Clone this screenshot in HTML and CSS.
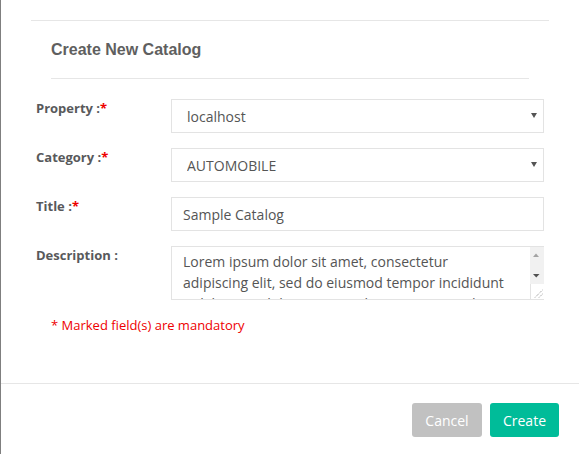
FILE: index.html
```html
<!DOCTYPE html>
<html lang="en">
<head>
<meta charset="utf-8">
<title>Create New Catalog</title>
<link rel="stylesheet" href="styles.css">
</head>
<body>
<div class="modal">
  <div class="top-rule"></div>
  <div class="header">
    <h2 class="title">Create New Catalog</h2>
  </div>
  <form class="form">
    <div class="row">
      <label class="label">Property :<span class="req">*</span></label>
      <div class="select-wrap">
        <select class="control select">
          <option>localhost</option>
        </select>
      </div>
    </div>
    <div class="row">
      <label class="label">Category :<span class="req">*</span></label>
      <div class="select-wrap">
        <select class="control select">
          <option>AUTOMOBILE</option>
        </select>
      </div>
    </div>
    <div class="row">
      <label class="label">Title :<span class="req">*</span></label>
      <input class="control" type="text" value="Sample Catalog">
    </div>
    <div class="row">
      <label class="label">Description :</label>
      <div class="ta-box">
        <textarea class="textarea">Lorem ipsum dolor sit amet, consectetur adipiscing elit, sed do eiusmod tempor incididunt ut labore et dolore magna aliqua. Ut enim ad minim veniam, quis nostrud exercitation ullamco laboris nisi ut aliquip ex ea commodo consequat.</textarea>
        <div class="sb">
          <div class="sb-track">
            <svg class="sb-btn" width="14" height="17" viewBox="0 0 14 17"><polygon points="3,10 6,6.5 9,10" fill="#a3a3a3"/></svg>
            <svg class="sb-btn" width="14" height="17" viewBox="0 0 14 17"><polygon points="3,7 9.5,7 6.25,10.5" fill="#505050"/></svg>
          </div>
          <div class="sb-corner">
            <svg width="14" height="15" viewBox="0 0 14 15"><line x1="5" y1="13.5" x2="12.5" y2="6" stroke="#8a8a8a" stroke-width="1" stroke-dasharray="1 1"/><line x1="9" y1="13.5" x2="12.5" y2="10" stroke="#8a8a8a" stroke-width="1" stroke-dasharray="1 1"/></svg>
          </div>
        </div>
      </div>
    </div>
  </form>
  <p class="note">* Marked field(s) are mandatory</p>
  <div class="footer">
    <button class="btn btn-cancel" type="button">Cancel</button>
    <button class="btn btn-create" type="button">Create</button>
  </div>
</div>
</body>
</html>
```
FILE: styles.css
```css
html, body {
  margin: 0;
  padding: 0;
  background: #ffffff;
}

.modal {
  width: 579px;
  height: 454px;
  box-sizing: border-box;
  border-left: 1px solid #7f7f7f;
  font-family: "Open Sans", "Liberation Sans", sans-serif;
  overflow: hidden;
}

.top-rule {
  height: 20px;
  width: 518px;
  margin-left: 30px;
  border-bottom: 1px solid #e6e6e6;
}

.header {
  margin-left: 50px;
  width: 478px;
  padding: 18px 0 17px;
  border-bottom: 1px solid #e6e6e6;
}

.title {
  margin: 0;
  font-family: "Liberation Sans", Arial, sans-serif;
  font-size: 16px;
  line-height: 22px;
  font-weight: bold;
  color: #5f5f5f;
}

.form {
  margin: 20px 0 0 35px;
  display: flex;
  flex-direction: column;
  gap: 15px;
}

.row {
  display: grid;
  grid-template-columns: 135px 373px;
  align-items: start;
}

.label {
  font-size: 13px;
  line-height: 18px;
  font-weight: bold;
  color: #58595b;
}

.req {
  color: #ee0000;
}

.select-wrap {
  position: relative;
}

.select-wrap::after {
  content: "";
  position: absolute;
  right: 7px;
  top: 14px;
  border-left: 3px solid transparent;
  border-right: 3px solid transparent;
  border-top: 5px solid #555;
  pointer-events: none;
}

.control {
  box-sizing: border-box;
  width: 373px;
  height: 34px;
  margin: 0;
  padding: 6px 11px;
  border: 1px solid #e3e3e3;
  border-radius: 0;
  background: #ffffff;
  font-family: "Open Sans", "Liberation Sans", sans-serif;
  font-size: 14px;
  line-height: 20px;
  color: #555555;
  outline: none;
}

.select {
  appearance: none;
  -webkit-appearance: none;
  padding: 7px 11px 5px 15px;
}

.ta-box {
  box-sizing: border-box;
  width: 373px;
  height: 54px;
  border: 1px solid #e3e3e3;
  border-right: none;
  display: flex;
  background: #ffffff;
}

.textarea {
  flex: 1;
  min-width: 0;
  height: 52px;
  box-sizing: border-box;
  margin: 0;
  padding: 4px 22px 0 11px;
  border: none;
  outline: none;
  resize: none;
  overflow: hidden;
  font-family: "Open Sans", "Liberation Sans", sans-serif;
  font-size: 14px;
  line-height: 21px;
  color: #555555;
  background: transparent;
}

.sb {
  width: 14px;
  display: flex;
  flex-direction: column;
}

.sb-track {
  height: 37px;
  background: #f1f1f1;
  display: flex;
  flex-direction: column;
  justify-content: space-between;
}

.sb-btn {
  display: block;
}

.sb-corner {
  flex: 1;
  box-sizing: border-box;
  border-left: 1px solid #e3e3e3;
  background: #ffffff;
  display: flex;
  align-items: flex-end;
}

.sb-corner svg {
  display: block;
  margin-left: -1px;
}

.note {
  margin: 16px 0 0 50px;
  font-size: 13px;
  line-height: 18px;
  color: #ee0000;
}

.footer {
  margin-top: 49px;
  border-top: 1px solid #e6e6e6;
  padding: 19px 20px;
  display: flex;
  justify-content: flex-end;
  gap: 8px;
}

.btn {
  box-sizing: border-box;
  height: 34px;
  padding: 6px 0 5px;
  border: none;
  border-radius: 3px;
  font-family: "Open Sans", "Liberation Sans", sans-serif;
  font-size: 14px;
  line-height: 20px;
  color: #ffffff;
  text-align: center;
}

.btn-cancel {
  width: 70px;
  background: #c1c1c1;
}

.btn-create {
  width: 69px;
  background: #00bc99;
}
```
